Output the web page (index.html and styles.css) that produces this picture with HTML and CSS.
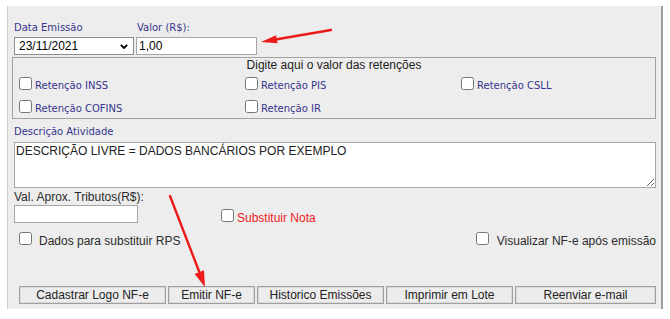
FILE: index.html
```html
<!DOCTYPE html>
<html lang="pt-BR">
<head>
<meta charset="utf-8">
<title>Emissão NF-e</title>
<link rel="stylesheet" href="styles.css">
</head>
<body>
<div class="panel">
  <div class="top-row">
    <div class="field">
      <label class="lbl">Data Emissão</label>
      <div class="select"><span>23/11/2021</span><svg class="chev" width="8" height="5" viewBox="0 0 8 5"><path d="M0.8 0.8 L4 4 L7.2 0.8" fill="none" stroke="#000" stroke-width="1.8"/></svg></div>
    </div>
    <div class="field">
      <label class="lbl lbl-valor">Valor (R$):</label>
      <input class="inp inp-valor" type="text" value="1,00">
    </div>
  </div>

  <div class="ret-box">
    <div class="ret-title">Digite aqui o valor das retenções</div>
    <div class="ret-grid">
      <label class="ck"><input type="checkbox"><span class="ck-lbl">Retenção INSS</span></label>
      <label class="ck"><input type="checkbox"><span class="ck-lbl">Retenção PIS</span></label>
      <label class="ck"><input type="checkbox"><span class="ck-lbl">Retenção CSLL</span></label>
      <label class="ck"><input type="checkbox"><span class="ck-lbl">Retenção COFINS</span></label>
      <label class="ck"><input type="checkbox"><span class="ck-lbl">Retenção IR</span></label>
    </div>
  </div>

  <label class="lbl desc-lbl">Descrição Atividade</label>
  <textarea class="desc">DESCRIÇÃO LIVRE = DADOS BANCÁRIOS POR EXEMPLO</textarea>

  <div class="trib-row">
    <div class="trib-field">
      <label class="plain">Val. Aprox. Tributos(R$):</label>
      <input class="inp inp-trib" type="text">
    </div>
    <label class="ck ck-sub"><input type="checkbox"><span class="plain-lbl red">Substituir Nota</span></label>
  </div>

  <div class="opt-row">
    <label class="ck ck-wide"><input type="checkbox"><span class="plain-lbl">Dados para substituir RPS</span></label>
    <label class="ck ck-wide ck-vis"><input type="checkbox"><span class="plain-lbl">Visualizar NF-e após emissão</span></label>
  </div>

  <div class="btn-row">
    <button class="btn b1">Cadastrar Logo NF-e</button>
    <button class="btn b2">Emitir NF-e</button>
    <button class="btn b3">Historico Emissões</button>
    <button class="btn b4">Imprimir em Lote</button>
    <button class="btn b5">Reenviar e-mail</button>
  </div>
</div>

<svg class="annot" width="670" height="319" viewBox="0 0 670 319">
  <line x1="331" y1="30" x2="277" y2="39.3" stroke="#ec1a1a" stroke-width="2.4" stroke-linecap="round"/>
  <polygon points="261,42 277.5,43.3 276.1,35.3" fill="#ec1a1a"/>
  <line x1="170" y1="196" x2="199.3" y2="272" stroke="#ec1a1a" stroke-width="2.4" stroke-linecap="round"/>
  <polygon points="205,287 204,270.3 194.6,273.9" fill="#ec1a1a"/>
</svg>
</body>
</html>
```

FILE: styles.css
```css
html, body {
  margin: 0;
  padding: 0;
  background: #ffffff;
}

body {
  width: 670px;
  height: 319px;
  position: relative;
  overflow: hidden;
  font-family: "Liberation Sans", Arial, sans-serif;
}

.panel {
  box-sizing: border-box;
  margin: 6px 0 0 7px;
  width: 656px;
  height: 303px;
  background: #ededed;
  border-left: 1px solid #cfcfcf;
  border-right: 2px solid #9c9c9c;
  padding: 16px 5px 5px 6px;
  display: flex;
  flex-direction: column;
}

.top-row {
  display: flex;
  gap: 2px;
}

.field {
  display: flex;
  flex-direction: column;
}

.lbl {
  font-family: "DejaVu Sans", Verdana, sans-serif;
  font-size: 10px;
  line-height: 12px;
  color: #35358f;
  margin-bottom: 3px;
}

.lbl-valor {
  margin-left: 1px;
}

.select {
  box-sizing: border-box;
  width: 120px;
  height: 18px;
  background: #fff;
  border: 1px solid #8c8c8c;
  padding: 0 5px 0 4px;
  display: flex;
  align-items: center;
  justify-content: space-between;
  font-size: 12px;
  color: #000;
}

.chev {
  display: block;
}

.inp {
  box-sizing: border-box;
  height: 18px;
  margin: 0;
  background: #fff;
  border: 1px solid #a6a6a6;
  padding: 0 2px;
  font-family: "Liberation Sans", Arial, sans-serif;
  font-size: 12px;
  color: #000;
  outline: none;
}

.inp-valor {
  width: 121px;
}

.inp-trib {
  width: 124px;
  margin-top: 1px;
}

.ret-box {
  margin: 2px 0 0 -2px;
  border: 1px solid #a3a3a3;
  padding: 0 0 3px 6px;
}

.ret-title {
  text-align: center;
  font-size: 12px;
  line-height: 14px;
  color: #222;
  padding-right: 6px;
}

.ret-grid {
  margin-top: 5px;
  display: grid;
  grid-template-columns: 226px 216px 1fr;
  grid-auto-rows: 15px;
  row-gap: 8px;
}

.ck {
  display: flex;
  align-items: flex-start;
}

.ck input {
  margin: 0;
  width: 13px;
  height: 13px;
  flex: none;
}

.ck-lbl {
  font-family: "DejaVu Sans", Verdana, sans-serif;
  font-size: 10px;
  line-height: 12px;
  color: #35358f;
  margin: 3px 0 0 3px;
  white-space: nowrap;
}

.desc-lbl {
  margin: 7px 0 0 0;
}

.desc {
  display: block;
  box-sizing: border-box;
  margin-top: 4px;
  height: 46px;
  width: 642px;
  background: #fff;
  border: 1px solid #a6a6a6;
  padding: 1px 1px;
  font-family: "Liberation Sans", Arial, sans-serif;
  font-size: 12px;
  line-height: 14px;
  color: #222;
  outline: none;
}

.trib-row {
  margin-top: 2px;
  display: flex;
  align-items: flex-start;
}

.trib-field {
  width: 207px;
  display: flex;
  flex-direction: column;
}

.plain {
  font-size: 12px;
  line-height: 14px;
  color: #2b2b2b;
  white-space: nowrap;
}

.plain-lbl {
  font-size: 12px;
  line-height: 14px;
  color: #2b2b2b;
  margin-top: 2px;
  white-space: nowrap;
}

.ck-sub {
  margin-top: 19px;
}

.ck-sub .plain-lbl {
  margin-left: 3px;
}

.red {
  color: #ee1c25;
}

.opt-row {
  margin: 7px 0 0 5px;
  display: flex;
  justify-content: space-between;
}

.ck-wide .plain-lbl {
  margin-left: 7px;
}

.ck-vis .plain-lbl {
  margin-left: 8px;
}

.btn-row {
  margin: auto 0 0 5px;
  display: flex;
  gap: 2px;
}

.btn {
  box-sizing: border-box;
  height: 18px;
  margin: 0;
  padding: 0;
  background: #ececec;
  border: 1px solid #9f9f9f;
  box-shadow: inset 0 0 0 1px #dadada;
  font-family: "Liberation Sans", Arial, sans-serif;
  font-size: 12px;
  line-height: 14px;
  color: #222;
  text-align: center;
}

.b1 { width: 147px; }
.b2 { width: 87px; }
.b3 { width: 127px; }
.b4 { width: 127px; }
.b5 { width: 141px; }

.annot {
  position: absolute;
  top: 0;
  left: 0;
  pointer-events: none;
}
```
